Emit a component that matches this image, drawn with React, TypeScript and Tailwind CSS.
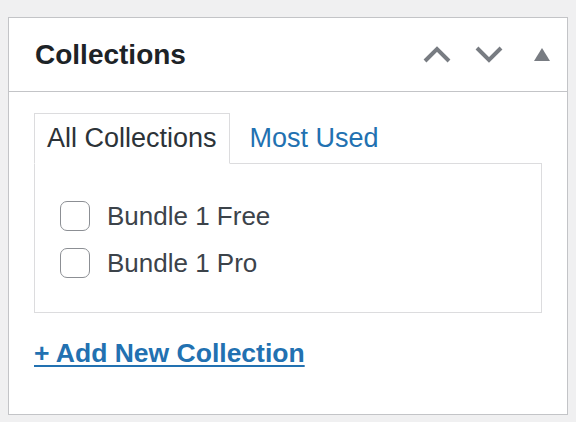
import React from "react";

const ChevronUp = () => (
  <svg width="28" height="17" viewBox="0 0 28 17" fill="none">
    <path d="M2 15 L14 3 L26 15" stroke="#787c82" strokeWidth="4" />
  </svg>
);

const ChevronDown = () => (
  <svg width="28" height="17" viewBox="0 0 28 17" fill="none">
    <path d="M2 2 L14 14 L26 2" stroke="#787c82" strokeWidth="4" />
  </svg>
);

const Triangle = () => (
  <svg width="16" height="13" viewBox="0 0 16 13">
    <path d="M8 0 L16 13 L0 13 Z" fill="#787c82" />
  </svg>
);

const items = ["Bundle 1 Free", "Bundle 1 Pro"];

export default function App() {
  return (
    <div
      className="min-h-[422px] w-[576px] bg-[#f0f0f1] pl-[8px] pt-[17px]"
      style={{ fontFamily: '"Liberation Sans", Arial, sans-serif' }}
    >
      <div className="h-[398px] w-[560px] border border-[#c3c4c7] bg-white">
        {/* Header */}
        <div className="flex h-[74px] items-center border-b border-[#c3c4c7] pl-[26px] pr-[17px]">
          <h2 className="flex-1 text-[28px] font-bold text-[#1d2327]">Collections</h2>
          <div className="flex items-center">
            <span className="mr-[24px] flex"><ChevronUp /></span>
            <span className="mr-[31px] flex"><ChevronDown /></span>
            <span className="flex"><Triangle /></span>
          </div>
        </div>

        {/* Body */}
        <div className="pl-[25px] pr-[25px] pt-[21px]">
          <div className="flex items-end">
            <div className="relative z-10 -mb-px flex h-[51px] items-center border border-b-white border-[#dcdcde] bg-white px-[12px] text-[27px] text-[#2c3338]">
              All Collections
            </div>
            <a className="ml-[20px] flex h-[50px] items-center text-[27px] text-[#2271b1]">Most Used</a>
          </div>
          <div className="h-[150px] w-[508px] border border-[#dcdcde] pl-[25px] pt-[37px]">
            {items.map((label) => (
              <label key={label} className="mb-[17px] flex h-[30px] items-center text-[26px] text-[#3c434a]">
                <span className="mr-[17px] h-[30px] w-[30px] rounded-[7px] border-[1.5px] border-[#8c8f94] bg-white" />
                {label}
              </label>
            ))}
          </div>
          <a className="mt-[24px] block text-[26.5px] font-bold leading-[32px] text-[#2271b1] underline decoration-2 underline-offset-[3px]">
            + Add New Collection
          </a>
        </div>
      </div>
    </div>
  );
}
